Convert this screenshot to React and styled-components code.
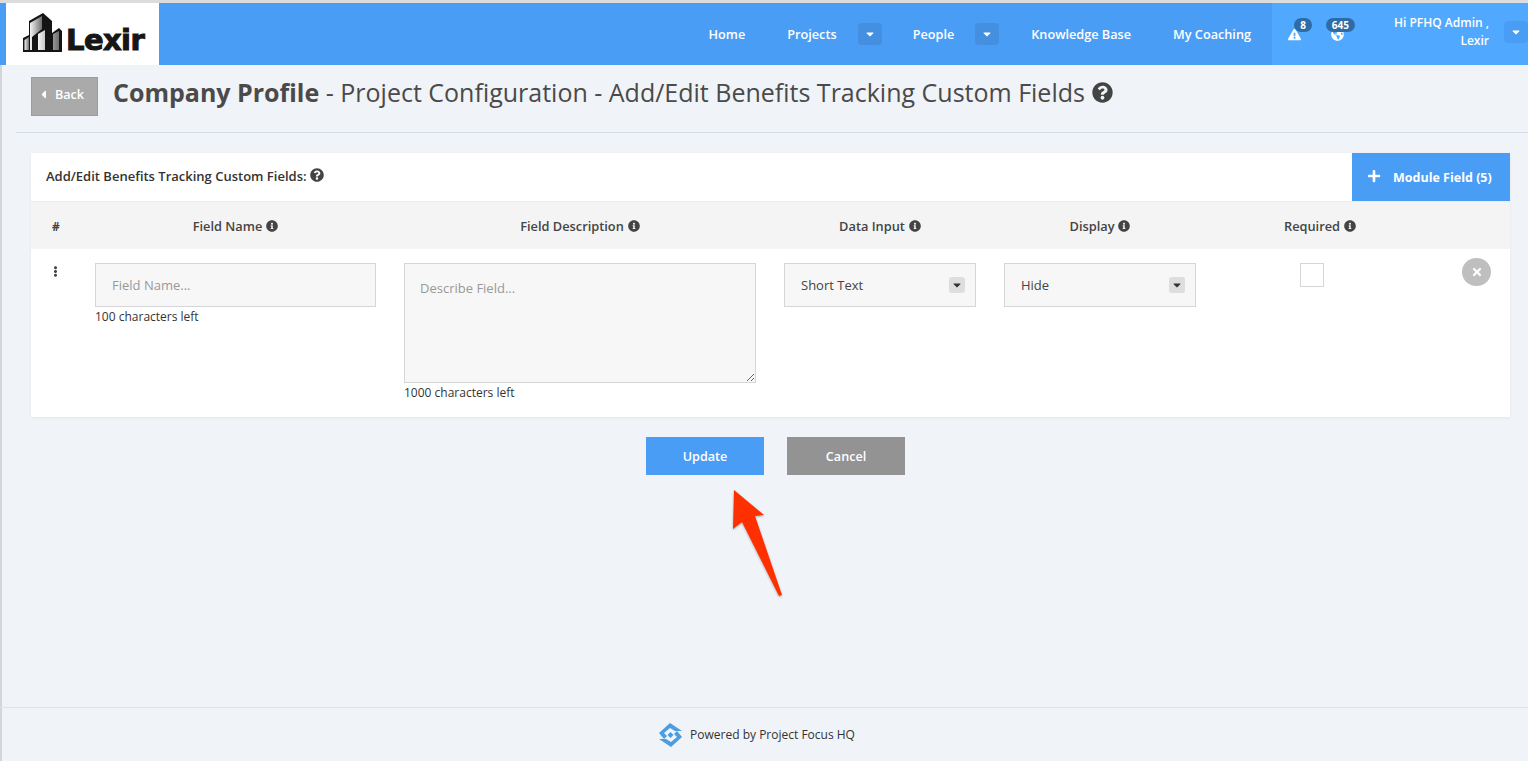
import React from "react";
import styled, { createGlobalStyle } from "styled-components";
import {
  FaCaretDown,
  FaCaretLeft,
  FaEllipsisV,
  FaExclamationTriangle,
  FaGlobeAmericas,
  FaInfoCircle,
  FaPlus,
  FaQuestionCircle,
  FaTimes,
} from "react-icons/fa";

const GlobalStyle = createGlobalStyle`
  * { box-sizing: border-box; }
  html, body { margin: 0; padding: 0; }
  body {
    background: #f0f3f7;
    font-family: "Open Sans", "Liberation Sans", sans-serif;
    color: #333;
  }
`;

const Page = styled.div`
  position: relative;
  min-height: 761px;
  display: flex;
  flex-direction: column;
  border-top: 3px solid #dcdcdc;
  overflow: hidden;
  box-shadow: inset 2px 0 0 #d3d5d8;
`;

const Header = styled.header`
  height: 62px;
  display: flex;
  background: #4a9df5;
  padding-left: 6px;
  color: #fff;
`;

const LogoBox = styled.div`
  width: 153px;
  background: #fff;
  display: flex;
  align-items: center;
  padding: 0 0 2px 17px;
`;

const LogoText = styled.span`
  font-family: "DejaVu Sans", sans-serif;
  font-weight: 700;
  font-size: 29px;
  letter-spacing: -0.6px;
  color: #161616;
  -webkit-text-stroke: 1px #161616;
  margin: 14px 0 0 3px;
`;

const Nav = styled.nav`
  flex: 1;
  display: flex;
  align-items: center;
  justify-content: flex-end;
  padding-right: 21px;
`;

const NavLink = styled.a`
  font-size: 12.7px;
  font-weight: 600;
  color: #fff;
  margin-left: ${(p) => p.$gap}px;
`;

const Drop = styled.span`
  flex: none;
  width: 24px;
  height: 22px;
  display: flex;
  align-items: center;
  justify-content: center;
  border-radius: 4px;
  background: ${(p) => p.$bg || "#448fdf"};
  color: #fff;
  font-size: 12px;
  margin-left: ${(p) => p.$gap}px;
  margin-top: ${(p) => p.$top || 0}px;
`;

const UserArea = styled.div`
  width: 256px;
  background: #50a9ff;
  display: flex;
  align-items: center;
  padding-left: 16px;
`;

const Alert = styled.div`
  position: relative;
  width: 14px;
  height: 13px;
  margin-right: ${(p) => p.$gap}px;
  font-size: 13px;
  display: flex;
  justify-content: center;
`;

const Count = styled.span`
  position: absolute;
  top: -10px;
  left: ${(p) => p.$left}px;
  height: 14px;
  min-width: ${(p) => p.$w}px;
  padding: 0 3px;
  border-radius: 7px;
  background: #2f6ca6;
  color: #fff;
  font-size: 10px;
  font-weight: 700;
  line-height: 14px;
  text-align: center;
`;

const UserName = styled.div`
  width: 112px;
  margin-left: 33px;
  text-align: right;
  font-size: 12px;
  font-weight: 600;
  line-height: 18px;
  margin-top: -5px;
  white-space: nowrap;
`;

const TitleRow = styled.div`
  margin: 12px 0 0 16px;
  padding: 0 0 16px 15px;
  display: flex;
  align-items: flex-start;
  border-bottom: 1px solid #d5dbe6;
`;

const BackButton = styled.button`
  width: 67px;
  height: 39px;
  display: flex;
  align-items: center;
  padding: 0 0 5px 5px;
  background: #aaaaaa;
  border: 1px solid #9c9c9c;
  color: #fff;
  font: 600 12.6px "Open Sans", sans-serif;

  svg {
    font-size: 13px;
    margin-right: 5px;
  }
`;

const Title = styled.h1`
  margin: -1px 0 0 15px;
  height: 32px;
  font-size: 25px;
  line-height: 32px;
  font-weight: 400;
  color: #4a4a4a;
  display: flex;
  align-items: center;
  white-space: pre;

  b {
    font-weight: 700;
  }

  svg {
    font-size: 21px;
    margin-left: 7px;
    color: #444;
  }
`;

const Card = styled.section`
  margin: 20px 18px 0 31px;
  background: #fff;
  box-shadow: 0 1px 3px rgba(0, 0, 0, 0.06);
`;

const CardHead = styled.div`
  height: 49px;
  display: flex;
  align-items: stretch;
  justify-content: space-between;
  border-bottom: 1px solid #ececec;
`;

const CardTitle = styled.div`
  display: flex;
  align-items: center;
  padding: 0 0 2px 15px;
  font-size: 13px;
  font-weight: 600;
  color: #333;

  svg {
    font-size: 14px;
    margin: 0 0 2px 3px;
    color: #444;
  }
`;

const ModuleButton = styled.button`
  width: 158px;
  height: 48px;
  display: flex;
  align-items: center;
  padding: 0 0 0 15px;
  border: 0;
  background: #4a9df5;
  color: #fff;
  font: 700 12.5px "Open Sans", sans-serif;

  svg {
    font-size: 14px;
    margin: 0 12px 3px 0;
  }
`;

const Columns = styled.div`
  display: grid;
  grid-template-columns: 64px 309px 380px 220px 220px 192px 1fr;
`;

const HeadRow = styled(Columns)`
  height: 47px;
  padding-top: 1px;
  background: #f4f4f4;
  align-items: center;
`;

const HeadCell = styled.div`
  display: flex;
  align-items: center;
  justify-content: center;
  padding-right: ${(p) => (p.$flush ? 0 : 28)}px;
  font-size: 12.8px;
  font-weight: 600;
  color: #444;

  svg {
    font-size: 12px;
    margin-left: 4px;
  }
`;

const Hash = styled(HeadCell)`
  padding: 0 14px 0 0;
  font-size: 12px;
  font-weight: 700;
`;

const BodyRow = styled(Columns)`
  height: 168px;
  padding-top: 14px;
  align-items: start;
`;

const Grip = styled.div`
  display: flex;
  justify-content: center;
  padding: 3px 16px 0 0;
  font-size: 11px;
  color: #444;
`;

const Cell = styled.div`
  padding-right: 28px;
`;

const TextInput = styled.input`
  display: block;
  width: 100%;
  height: 44px;
  padding: 0 16px;
  background: #f7f7f7;
  border: 1px solid #d6d6d6;
  border-radius: 0;
  outline: 0;
  font: 400 13px "Open Sans", sans-serif;

  &::placeholder {
    color: #999;
    opacity: 1;
  }
`;

const TextBox = styled.textarea`
  display: block;
  width: 100%;
  height: 120px;
  padding: 15px 15px;
  background: #f7f7f7;
  border: 1px solid #d6d6d6;
  border-radius: 0;
  outline: 0;
  font: 400 13px "Open Sans", sans-serif;

  &::placeholder {
    color: #999;
    opacity: 1;
  }
`;

const Hint = styled.div`
  margin-top: 2px;
  font-size: 12px;
  line-height: 16px;
  color: #333;
`;

const Select = styled.div`
  height: 44px;
  display: flex;
  align-items: center;
  justify-content: space-between;
  padding: 0 10px 0 16px;
  background: #f7f7f7;
  border: 1px solid #d6d6d6;
  font-size: 13px;
  color: #444;
`;

const SelectCaret = styled.span`
  width: 16px;
  height: 16px;
  display: flex;
  align-items: center;
  justify-content: center;
  border-radius: 3px;
  background: #dedede;
  color: #333;
  font-size: 12px;
`;

const Check = styled.div`
  width: 24px;
  height: 24px;
  margin-left: 76px;
  background: #fff;
  border: 1px solid #d6d6d6;
`;

const Remove = styled.button`
  justify-self: end;
  width: 29px;
  height: 28px;
  margin: -5px 19px 0 0;
  display: flex;
  align-items: center;
  justify-content: center;
  padding: 0;
  border: 0;
  border-radius: 50%;
  background: #bfbfbf;
  color: #fff;
  font-size: 12px;
`;

const Actions = styled.div`
  margin: 20px 0 0 0;
  padding-left: 23px;
  display: flex;
  justify-content: center;
  gap: 23px;
`;

const ActionButton = styled.button`
  width: 118px;
  height: 38px;
  border: 0;
  background: ${(p) => p.$bg};
  color: #fff;
  font: 600 12.6px "Open Sans", sans-serif;
`;

const Arrow = styled.svg`
  position: absolute;
  left: 725px;
  top: 480px;
  filter: drop-shadow(0 1px 1px rgba(0, 0, 0, 0.3));
`;

const Footer = styled.footer`
  margin-top: auto;
  height: 54px;
  display: flex;
  align-items: center;
  justify-content: center;
  padding-right: 15px;
  border-top: 1px solid #dfe2e6;
  font-size: 12px;
  color: #333;

  svg {
    margin-right: 7px;
  }
`;

function Logo() {
  return (
    <svg width="40" height="40" viewBox="0 0 40 40">
      <defs>
        <linearGradient id="glass" x1="0" x2="1" y1="0" y2="0">
          <stop offset="0" stopColor="#f4f4f4" />
          <stop offset="1" stopColor="#707070" />
        </linearGradient>
      </defs>
      <path d="M6 8L20 0l9 8v12l7-5 3 3v21H0V25l6-3z" fill="#141414" />
      <path d="M7 10l12-7v13l-10 8v13H7z" fill="url(#glass)" />
      <path d="M1.500 27L6 24v13H1.500z" fill="url(#glass)" />
      <path d="M15 21l7-4v20h-7zM30 21l6-3v19h-6z" fill="url(#glass)" />
    </svg>
  );
}

function FocusLogo() {
  return (
    <svg width="25" height="24" viewBox="0 0 25 24">
      <path d="M12 0l12 8h-7l-5-3-6 5 3 3-3 3-5-6z" fill="#4a9de0" />
      <path d="M13 24L1 16h7l5 3 6-5-3-3 3-3 5 6z" fill="#4a9de0" />
      <path d="M12.500 9l3 3-3 3-3-3z" fill="#4a9de0" />
    </svg>
  );
}

export default function App() {
  return (
    <>
      <GlobalStyle />
      <Page>
        <Header>
          <LogoBox>
            <Logo />
            <LogoText>Lexir</LogoText>
          </LogoBox>
          <Nav>
            <NavLink $gap={0}>Home</NavLink>
            <NavLink $gap={42}>Projects</NavLink>
            <Drop $gap={21}><FaCaretDown /></Drop>
            <NavLink $gap={31}>People</NavLink>
            <Drop $gap={21}><FaCaretDown /></Drop>
            <NavLink $gap={32}>Knowledge Base</NavLink>
            <NavLink $gap={42}>My Coaching</NavLink>
          </Nav>
          <UserArea>
            <Alert $gap={29}>
              <FaExclamationTriangle />
              <Count $left={6} $w={18}>8</Count>
            </Alert>
            <Alert $gap={0}>
              <FaGlobeAmericas />
              <Count $left={-5} $w={29}>645</Count>
            </Alert>
            <UserName>Hi PFHQ Admin ,<br />Lexir</UserName>
            <Drop $gap={15} $top={-4} $bg="#4a9df5"><FaCaretDown /></Drop>
          </UserArea>
        </Header>

        <TitleRow>
          <BackButton><FaCaretLeft />Back</BackButton>
          <Title>
            <b>Company Profile</b> - Project Configuration - Add/Edit Benefits Tracking Custom Fields
            <FaQuestionCircle />
          </Title>
        </TitleRow>

        <Card>
          <CardHead>
            <CardTitle>Add/Edit Benefits Tracking Custom Fields: <FaQuestionCircle /></CardTitle>
            <ModuleButton><FaPlus />Module Field (5)</ModuleButton>
          </CardHead>
          <HeadRow>
            <Hash>#</Hash>
            <HeadCell>Field Name <FaInfoCircle /></HeadCell>
            <HeadCell>Field Description <FaInfoCircle /></HeadCell>
            <HeadCell>Data Input <FaInfoCircle /></HeadCell>
            <HeadCell>Display <FaInfoCircle /></HeadCell>
            <HeadCell $flush>Required <FaInfoCircle /></HeadCell>
          </HeadRow>
          <BodyRow>
            <Grip><FaEllipsisV /></Grip>
            <Cell>
              <TextInput placeholder="Field Name..." />
              <Hint>100 characters left</Hint>
            </Cell>
            <Cell>
              <TextBox placeholder="Describe Field..." />
              <Hint>1000 characters left</Hint>
            </Cell>
            <Cell>
              <Select>Short Text<SelectCaret><FaCaretDown /></SelectCaret></Select>
            </Cell>
            <Cell>
              <Select>Hide<SelectCaret><FaCaretDown /></SelectCaret></Select>
            </Cell>
            <Check />
            <Remove><FaTimes /></Remove>
          </BodyRow>
        </Card>

        <Actions>
          <ActionButton $bg="#4a9df5">Update</ActionButton>
          <ActionButton $bg="#939393">Cancel</ActionButton>
        </Actions>

        <Arrow width="62" height="118" viewBox="0 0 62 118">
          <path d="M9 7l30 25-9 1 27 79-3 1-37-74-9 7z" fill="#ff3000" />
        </Arrow>

        <Footer>
          <FocusLogo />
          Powered by Project Focus HQ
        </Footer>
      </Page>
    </>
  );
}
